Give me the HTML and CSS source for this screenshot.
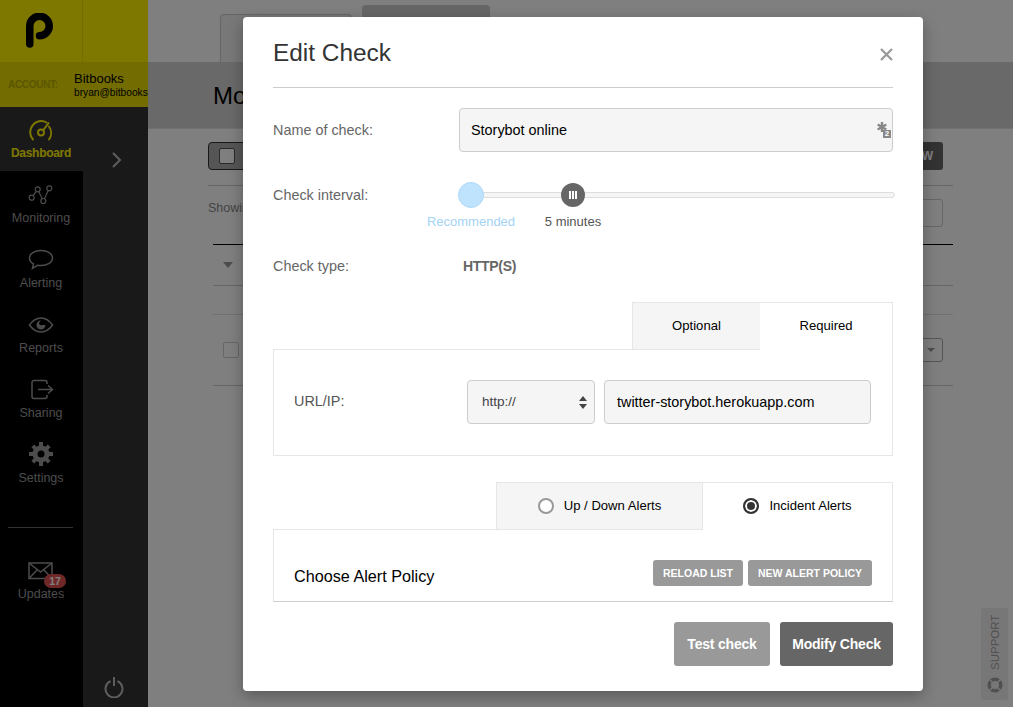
FILE: index.html
```html
<!DOCTYPE html>
<html>
<head>
    <title>Edit Check</title>
    <link rel="stylesheet" href="styles.css">
</head>
<body>
    <div class="app">
        <div class="sidebar">
            <div class="brand">
                <div class="brand-logo">
                    <svg width="28" height="36" viewBox="0 0 28 36"><path d="M3.750 31V13a9.750 9.750 0 1 1 9.750 9.750" fill="none" stroke="#000" stroke-width="7.500" stroke-linecap="round"/></svg>
                </div>
            </div>
            <div class="account">
                <span class="account-label">ACCOUNT:</span>
                <div class="account-info">
                    <div class="account-name">Bitbooks</div>
                    <div class="account-mail">bryan@bitbooks.com</div>
                </div>
            </div>
            <div class="side-body">
                <div class="nav">
                    <a class="nav-item active">
                        <svg width="26" height="22" viewBox="0 0 26 22" fill="none" stroke="#fff000" stroke-width="2"><path d="M5 20.500A11 11 0 0 1 18.500 3.500M21 7.500a11 11 0 0 1 0 13" stroke-linecap="round"/><circle cx="13" cy="13.500" r="3"/><path d="M15 11.500l6-8"/></svg>
                        <span>Dashboard</span>
                    </a>
                    <a class="nav-item">
                        <svg width="26" height="22" viewBox="0 0 26 22" fill="none" stroke="#999" stroke-width="1.200"><circle cx="3.700" cy="13.700" r="2.500"/><circle cx="9.700" cy="5.300" r="2.500"/><circle cx="15.300" cy="17" r="2.500"/><circle cx="21.300" cy="4.300" r="2.500"/><path d="M5.200 11.700l3-4.400M10.700 7.600l3.600 7.100M16.400 14.800l3.800-8.200"/></svg>
                        <span>Monitoring</span>
                    </a>
                    <a class="nav-item">
                        <svg width="26" height="22" viewBox="0 0 26 22" fill="none" stroke="#999" stroke-width="1.500"><path d="M13 1.500c6.500 0 11.500 3.300 11.500 7.500S19.500 16.500 13 16.500c-1.200 0-2.300-.1-3.300-.3L4.500 19.500l1-4.600C3 13.500 1.500 11.400 1.500 9 1.500 4.800 6.500 1.500 13 1.500z"/></svg>
                        <span>Alerting</span>
                    </a>
                    <a class="nav-item">
                        <svg width="26" height="22" viewBox="0 0 26 22"><path d="M1.500 11C5 6 9 4 13 4s8 2 11.500 7C21 16 17 18 13 18S5 16 1.500 11z" fill="none" stroke="#999" stroke-width="1.500"/><path d="M13 6.500a4.500 4.500 0 1 0 4.500 4.500h-3.500a2 2 0 0 1-2-3.500z" fill="#999"/></svg>
                        <span>Reports</span>
                    </a>
                    <a class="nav-item">
                        <svg width="26" height="22" viewBox="0 0 26 22" fill="none" stroke="#999" stroke-width="1.500"><path d="M19 5V3.500a2 2 0 0 0-2-2H6a2 2 0 0 0-2 2v14a2 2 0 0 0 2 2h11a2 2 0 0 0 2-2V16"/><path d="M10 10.500h14M20 6.500l4.500 4-4.500 4"/></svg>
                        <span>Sharing</span>
                    </a>
                    <a class="nav-item">
                        <svg class="gear" width="26" height="24" viewBox="0 0 26 24"><g stroke="#999" stroke-width="4"><path d="M13 0v24M1 12h24M4.800 3.800l16.400 16.400M21.200 3.800L4.800 20.200"/></g><circle cx="13" cy="12" r="8.500" fill="#999"/><circle cx="13" cy="12" r="3.500" fill="#000"/></svg>
                        <span>Settings</span>
                    </a>
                    <div class="nav-rule"></div>
                    <a class="nav-item updates">
                        <svg width="26" height="18" viewBox="0 0 26 18" fill="none" stroke="#999" stroke-width="1.500"><rect x="1" y="1" width="23" height="15.500"/><path d="M1 1l11.500 9L24 1M1 16.500l8-8.500M24 16.500l-8-8.500"/></svg>
                        <span class="badge">17</span>
                        <span>Updates</span>
                    </a>
                </div>
                <div class="side-rest">
                    <svg class="chevron" width="12" height="16" viewBox="0 0 12 16"><path d="M2 1l7 7-7 7" fill="none" stroke="#bbb" stroke-width="2"/></svg>
                    <svg class="power" width="20" height="21" viewBox="0 0 20 21" fill="none" stroke="#bbb" stroke-width="2"><path d="M6.500 4.200a8.500 8.500 0 1 0 7 0M10 0v9"/></svg>
                </div>
            </div>
        </div>

        <div class="main">
            <div class="top-tabs">
                <div class="top-tab"></div>
                <div class="top-tab dark"></div>
            </div>
            <div class="page-head"><h1>Monitoring</h1></div>
            <div class="content">
                <div class="toolbar">
                    <div class="select-all"><span class="box"></span></div>
                    <div class="new-btn">NEW</div>
                </div>
                <div class="showing">
                    <span>Showing</span>
                    <div class="search"></div>
                </div>
                <div class="table-head"><span class="caret"></span></div>
                <div class="table-gap"></div>
                <div class="table-row">
                    <span class="box small"></span>
                    <div class="row-select"><span class="caret small"></span></div>
                </div>
            </div>
        </div>
    </div>

    <div class="backdrop"></div>

    <div class="support">
        <span class="support-text">SUPPORT</span>
        <svg width="16" height="16" viewBox="0 0 18 18" fill="none"><circle cx="9" cy="9" r="6.500" stroke="#505050" stroke-width="4"/><path d="M3 3l3 3M15 3l-3 3M3 15l3-3M15 15l-3-3" stroke="#777" stroke-width="1.500"/></svg>
    </div>

    <div class="modal">
        <div class="modal-head">
            <h2>Edit Check</h2>
            <svg class="close" width="13" height="13" viewBox="0 0 13 13"><path d="M1 1l11 11M12 1L1 12" stroke="#999" stroke-width="2.300"/></svg>
        </div>

        <div class="field name-field">
            <label>Name of check:</label>
            <div class="input name-input">
                Storybot online
                <span class="key-icon">
                    <svg width="15" height="16" viewBox="0 0 15 16"><path d="M5 0v10M.7 2.500l8.600 5M9.300 2.500l-8.600 5" stroke="#888" stroke-width="2.400"/><rect x="6" y="8" width="8" height="8" fill="#888"/></svg>
                    <b>2</b>
                </span>
            </div>
        </div>

        <div class="field interval-field">
            <label>Check interval:</label>
            <div class="slider">
                <div class="track"></div>
                <div class="stop recommended">
                    <span class="dot"></span>
                    <span class="stop-text">Recommended</span>
                </div>
                <div class="stop current">
                    <span class="dot"><i></i><i></i><i></i></span>
                    <span class="stop-text">5 minutes</span>
                </div>
            </div>
        </div>

        <div class="field type-field">
            <label>Check type:</label>
            <strong>HTTP(S)</strong>
        </div>

        <div class="tabs tabs-one">
            <div class="tab off">Optional</div>
            <div class="tab on">Required</div>
        </div>
        <div class="panel url-panel">
            <label>URL/IP:</label>
            <div class="input proto">
                http://
                <svg width="8" height="13" viewBox="0 0 8 13"><path d="M4 0l4 5H0zM4 13L0 8h8z" fill="#444"/></svg>
            </div>
            <div class="input url">twitter-storybot.herokuapp.com</div>
        </div>

        <div class="tabs tabs-two">
            <div class="tab off"><span class="radio"></span>Up / Down Alerts</div>
            <div class="tab on"><span class="radio checked"></span>Incident Alerts</div>
        </div>
        <div class="panel alert-panel">
            <span class="policy-title">Choose Alert Policy</span>
            <div class="small-btns">
                <a class="small-btn">RELOAD LIST</a>
                <a class="small-btn">NEW ALERT POLICY</a>
            </div>
        </div>

        <div class="modal-foot">
            <a class="btn test">Test check</a>
            <a class="btn modify">Modify Check</a>
        </div>
    </div>
</body>
</html>
```

FILE: styles.css
```css
html, body {
    height: 100%;
}
body {
    margin: 0;
    overflow: hidden;
    font-family: "Liberation Sans", Arial, sans-serif;
    color: #333;
    background-color: #fff;
}
.app {
    display: flex;
    height: 707px;
}

/* sidebar */
.sidebar {
    width: 148px;
    flex: none;
    display: flex;
    flex-direction: column;
    background-color: #333;
}
.brand {
    height: 62px;
    background-color: #fff000;
    flex: none;
}
.brand-logo {
    width: 83px;
    height: 62px;
    padding: 13px 0 0 26px;
    box-sizing: border-box;
    border-right: 1px solid #e6d800;
}
.account {
    height: 45px;
    flex: none;
    display: flex;
    align-items: center;
    background-color: #e6d800;
    overflow: hidden;
    white-space: nowrap;
}
.account-label {
    width: 74px;
    flex: none;
    padding-left: 8px;
    box-sizing: border-box;
    font-size: 10px;
    font-weight: bold;
    letter-spacing: -0.300px;
    color: #b8ad00;
}
.account-name {
    font-size: 13px;
    color: #000;
}
.account-mail {
    font-size: 10.200px;
    color: #000;
    margin-top: 1px;
}
.side-body {
    flex: 1;
    display: flex;
}
.nav {
    width: 83px;
    flex: none;
    background-color: #000;
}
.nav-item {
    height: 65px;
    display: flex;
    flex-direction: column;
    align-items: center;
    padding: 13px 1px 0 0;
    box-sizing: border-box;
    color: #999;
    font-size: 12.500px;
    position: relative;
}
.nav-item svg {
    margin: 0 1px 5px 0;
}
.nav-item svg.gear {
    margin-top: -2px;
}
.nav-item.active {
    height: 64px;
    padding-top: 12px;
    background-color: #333;
    color: #fff000;
    font-size: 12px;
    font-weight: bold;
    letter-spacing: -0.300px;
}
.nav-rule {
    height: 1px;
    margin: 31px 10px 0 8px;
    background-color: #666;
}
.nav-item.updates {
    padding-top: 34px;
    height: 80px;
}
.nav-item.updates svg {
    margin-bottom: 7px;
}
.badge {
    position: absolute;
    left: 44px;
    top: 46px;
    width: 22px;
    height: 14px;
    line-height: 14px;
    border-radius: 7px;
    background-color: #e04f4f;
    color: #fff;
    font-size: 10.500px;
    font-weight: bold;
    text-align: center;
}
.side-rest {
    flex: 1;
    position: relative;
}
.chevron {
    position: absolute;
    left: 28px;
    top: 45px;
}
.power {
    position: absolute;
    left: 21px;
    bottom: 9px;
}

/* page under the dialog */
.main {
    flex: 1;
    min-width: 0;
}
.top-tabs {
    height: 62px;
    box-sizing: border-box;
    padding-left: 72px;
    display: flex;
    gap: 10px;
    align-items: flex-end;
}
.top-tab {
    width: 132px;
    height: 48px;
    box-sizing: border-box;
    border: 1px solid #ccc;
    border-bottom: 0;
    border-radius: 4px 4px 0 0;
    background-color: #f0f0f0;
}
.top-tab.dark {
    width: 128px;
    height: 57px;
    border: 0;
    background-color: #ccc;
}
.page-head {
    height: 67px;
    box-sizing: border-box;
    background-color: #d2d2d2;
    border-bottom: 1px solid #e0e0e0;
    padding: 20px 0 0 65px;
}
.page-head h1 {
    margin: 0;
    font-size: 24px;
    font-weight: normal;
    color: #000;
}
.content {
    padding: 13px 60px 0 60px;
}
.toolbar {
    display: flex;
    justify-content: space-between;
    height: 43px;
    border-bottom: 1px solid #ccc;
}
.select-all {
    width: 60px;
    height: 28px;
    box-sizing: border-box;
    border: 1px solid #333;
    border-radius: 4px;
    background-color: #aaa;
    padding: 5px 10px;
}
.box {
    display: block;
    width: 14px;
    height: 14px;
    border: 1px solid #555;
    border-radius: 2px;
    background-color: #fff;
}
.box.small {
    border-color: #ccc;
}
.new-btn {
    width: 50px;
    height: 28px;
    line-height: 28px;
    box-sizing: border-box;
    margin-right: 10px;
    padding-right: 10px;
    border-radius: 3px;
    background-color: #666;
    color: #fff;
    font-size: 12px;
    font-weight: bold;
    text-align: right;
}
.showing {
    height: 59px;
    padding: 15px 10px 0 0;
    box-sizing: border-box;
    display: flex;
    justify-content: space-between;
    font-size: 12.500px;
    color: #888;
    position: relative;
}
.showing::after {
    content: "";
    position: absolute;
    left: 5px;
    right: 0;
    bottom: 0;
    height: 1px;
    background-color: #000;
}
.search {
    width: 50px;
    height: 28px;
    margin-top: -2px;
    box-sizing: border-box;
    border: 1px solid #ccc;
    border-radius: 3px;
}
.table-head {
    height: 41px;
    box-sizing: border-box;
    margin-left: 5px;
    padding: 17px 0 0 10px;
    border-bottom: 1px solid #ccc;
}
.caret {
    display: block;
    width: 0;
    border: 5.500px solid transparent;
    border-top: 6px solid #999;
    border-bottom: 0;
}
.table-gap {
    height: 28px;
    margin-left: 5px;
    border-bottom: 1px solid #e0e0e0;
}
.table-row {
    height: 71px;
    box-sizing: border-box;
    margin-left: 5px;
    padding: 27px 10px 0 10px;
    display: flex;
    justify-content: space-between;
    border-bottom: 1px solid #ccc;
}
.row-select {
    width: 30px;
    height: 24px;
    margin-top: -4px;
    box-sizing: border-box;
    border: 1px solid #aaa;
    border-radius: 3px;
    padding: 9px 0 0 13px;
}
.caret.small {
    border-width: 4px 4px 0;
}
.backdrop {
    position: absolute;
    left: 0;
    top: 0;
    right: 0;
    bottom: 0;
    background-color: rgba(0,0,0,0.5);
}
.support {
    position: absolute;
    left: 981px;
    top: 608px;
    width: 27px;
    height: 92px;
    box-sizing: border-box;
    padding: 9px 0 0 6px;
    border-radius: 3px;
    background-color: #777;
}
.support-text {
    display: block;
    height: 53px;
    margin-left: 1px;
    writing-mode: vertical-rl;
    transform: rotate(180deg);
    font-size: 11.500px;
    line-height: 14px;
    text-align: left;
    color: #505050;
}
.support svg {
    display: block;
    margin-top: 7px;
}

/* dialog */
.modal {
    position: absolute;
    left: 243px;
    top: 17px;
    width: 680px;
    height: 674px;
    box-sizing: border-box;
    padding: 0 30px;
    background-color: #fff;
    border-radius: 4px;
    box-shadow: 0 5px 15px rgba(0,0,0,0.3);
}
.modal-head {
    height: 71px;
    box-sizing: border-box;
    border-bottom: 1px solid #ccc;
    display: flex;
    justify-content: space-between;
}
.modal-head h2 {
    margin: 20px 0 0;
    font-size: 24.400px;
    line-height: 32px;
    font-weight: normal;
    color: #333;
}
.close {
    margin: 31px 0 0;
}
.field {
    display: flex;
}
.field label {
    width: 186px;
    flex: none;
    font-size: 14.400px;
    color: #666;
}
.name-field {
    margin-top: 20px;
    align-items: center;
}
.input {
    height: 44px;
    line-height: 42px;
    box-sizing: border-box;
    border: 1px solid #ccc;
    border-radius: 4px;
    background-color: #f5f5f5;
    padding: 0 11px;
    font-size: 14.400px;
    color: #000;
}
.name-input {
    flex: 1;
    position: relative;
}
.key-icon {
    position: absolute;
    right: 0;
    top: 13px;
    width: 15px;
    height: 16px;
    display: block;
}
.key-icon svg {
    display: block;
}
.key-icon b {
    position: absolute;
    left: 6px;
    top: 8px;
    width: 8px;
    text-align: center;
    font-size: 8px;
    line-height: 8px;
    color: #fff;
}
.interval-field {
    margin-top: 31px;
}
.interval-field label {
    line-height: 24px;
}
.slider {
    flex: 1;
    height: 44px;
    position: relative;
    margin-right: -2px;
}
.track {
    position: absolute;
    left: 0;
    right: 0;
    top: 9px;
    height: 6px;
    box-sizing: border-box;
    border: 1px solid #ddd;
    border-radius: 3px;
    background-color: #f5f5f5;
}
.stop {
    position: absolute;
    top: 0;
    display: flex;
    flex-direction: column;
    align-items: center;
    font-size: 13px;
    white-space: nowrap;
}
.recommended {
    left: -32px;
    width: 88px;
}
.current {
    left: 74px;
    width: 80px;
}
.dot {
    width: 24px;
    height: 24px;
    border-radius: 50%;
    display: flex;
    align-items: center;
    justify-content: center;
    gap: 1px;
    box-sizing: border-box;
}
.dot i {
    width: 2px;
    height: 8px;
    background-color: #fff;
}
.recommended .dot {
    width: 26px;
    height: 26px;
    margin-top: -1px;
    background-color: #bfe3fd;
    border: 1px solid #acd8f9;
}
.current .dot {
    background-color: #666;
}
.stop-text {
    margin-top: 7px;
}
.recommended .stop-text {
    margin-top: 6px;
    color: #a3d3f5;
}
.current .stop-text {
    color: #555;
}
.type-field {
    margin-top: 30px;
    align-items: center;
    line-height: 18px;
}
.type-field label {
    width: 190px;
}
.type-field strong {
    font-size: 14px;
    color: #666;
    letter-spacing: -0.300px;
}
.tabs {
    display: flex;
    justify-content: flex-end;
    height: 47px;
    font-size: 13.100px;
    color: #000;
}
.tabs-one {
    margin-top: 27px;
}
.tabs-two {
    margin-top: 26px;
}
.tab {
    box-sizing: border-box;
    border: 1px solid #e6e6e6;
    padding-bottom: 1px;
    display: flex;
    align-items: center;
    justify-content: center;
}
.tab.off {
    background-color: #f5f5f5;
    border-right: 0;
    border-bottom: 0;
}
.tab.on {
    height: 48px;
    padding-bottom: 2px;
    border-bottom: 0;
    background-color: #fff;
    position: relative;
    z-index: 1;
}
.tabs-one .tab.off {
    width: 128px;
}
.tabs-one .tab.on {
    width: 133px;
    border-left: 0;
}
.tabs-two .tab.off {
    width: 206px;
}
.tabs-two .tab.on {
    width: 191px;
}
.panel {
    box-sizing: border-box;
    border: 1px solid #e6e6e6;
    display: flex;
}
.url-panel {
    height: 107px;
    padding: 30px 21px 0 20px;
    font-size: 14.400px;
}
.url-panel label {
    width: 173px;
    line-height: 43px;
    color: #555;
}
.proto {
    width: 128px;
    padding: 0 7px 0 14px;
    display: flex;
    align-items: center;
    justify-content: space-between;
    font-size: 13.500px;
    color: #444;
    margin-right: 9px;
}
.url {
    flex: 1;
    padding: 0 12px;
}
.alert-panel {
    height: 73px;
    padding: 30px 20px 0 20px;
    justify-content: space-between;
    border-bottom-color: #ccc;
}
.policy-title {
    font-size: 16.200px;
    line-height: 32px;
    color: #000;
}
.small-btns {
    display: flex;
    gap: 5px;
}
.small-btn {
    height: 26px;
    line-height: 26px;
    padding: 0 10px;
    border-radius: 3px;
    background-color: #999;
    color: #fff;
    font-size: 10.500px;
    font-weight: bold;
}
.radio {
    width: 16px;
    height: 16px;
    box-sizing: border-box;
    border: 2px solid #999;
    border-radius: 50%;
    margin-right: 10px;
    background-color: #fff;
    flex: none;
}
.radio.checked {
    border-color: #333;
    background-color: #333;
    box-shadow: inset 0 0 0 2px #fff;
}
.modal-foot {
    display: flex;
    justify-content: flex-end;
    gap: 10px;
    margin-top: 20px;
}
.btn {
    height: 44px;
    line-height: 44px;
    border-radius: 3px;
    color: #fff;
    font-size: 14px;
    font-weight: bold;
    text-align: center;
    letter-spacing: -0.200px;
}
.btn.test {
    width: 96px;
    background-color: #999;
}
.btn.modify {
    width: 113px;
    background-color: #666;
}
```
